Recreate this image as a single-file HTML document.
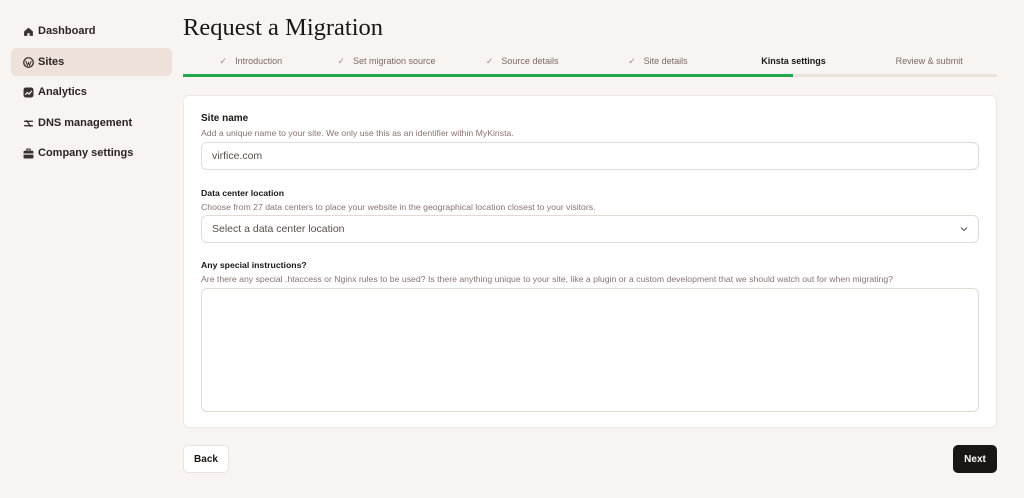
<!DOCTYPE html>
<html><head><style>
*{box-sizing:border-box;margin:0;padding:0}
body{width:1024px;height:498px;background:#f8f4f1;font-family:"Liberation Sans",sans-serif;position:relative;overflow:hidden;color:#1a1615}
.nav{position:absolute;left:11px;width:161px;height:28px;display:flex;align-items:center;padding-left:12px;font-size:11px;color:#2a2422;font-weight:600}
.nav svg{width:11px;height:11px;margin-right:4px}
.act{background:#ede1d9;border-radius:5px}
h1{position:absolute;left:183px;top:14px;font-family:"Liberation Serif",serif;font-weight:400;font-size:24.5px;color:#1a1615}
.steps{position:absolute;left:183px;top:56px;width:814px;display:flex;font-size:9px;color:#7a6a66}
.steps div{flex:1;text-align:center}
.steps span{color:#9a8f8b;margin-right:8px}
.bar{position:absolute;left:183px;top:74px;width:814px;height:3px;background:#ece3de}
.bar i{display:block;width:610px;height:3px;background:#1fa74a}
.card{position:absolute;left:183px;top:95px;width:814px;height:333px;background:#fff;border-radius:6px;border:1px solid #efe8e4}
.lbl{position:absolute;left:17px;font-size:10px;font-weight:600;color:#1a1615}
.hint{position:absolute;left:17px;font-size:8.7px;color:#8a7370}
.inp{position:absolute;left:17px;width:778px;border:1px solid #e3dad6;border-radius:6px;font-size:10.5px;color:#5a4e4b;padding-left:10px;display:flex;align-items:center}
.btn{position:absolute;top:445px;height:28px;border-radius:5px;font-size:10px;font-weight:600;display:flex;align-items:center;justify-content:center}
</style></head><body>
<div class="nav" style="top:17px"><svg viewBox="0 0 10 10"><path d="M1 5L5 1.5 9 5V9H6V6.5H4V9H1Z" fill="#3a3230"/></svg>Dashboard</div>
<div class="nav act" style="top:48px"><svg viewBox="0 0 10 10"><circle cx="5" cy="5" r="4.3" fill="none" stroke="#3a3230" stroke-width="1.2"/><path d="M2.5 3.5L4 7.5 5 5 6 7.5 7.5 3.5" fill="none" stroke="#3a3230" stroke-width=".9"/></svg>Sites</div>
<div class="nav" style="top:78px"><svg viewBox="0 0 10 10"><rect x=".5" y=".5" width="9" height="9" rx="2" fill="#3a3230"/><path d="M2 7L4 5 5.5 6.5 8 3.5" stroke="#fff" fill="none"/></svg>Analytics</div>
<div class="nav" style="top:109px"><svg viewBox="0 0 10 10"><path d="M1 3H9M1 7H9M3 2L7 8" stroke="#3a3230" stroke-width="1.2"/></svg>DNS management</div>
<div class="nav" style="top:139px"><svg viewBox="0 0 10 10"><rect x=".5" y="2.5" width="9" height="7" rx="1" fill="#3a3230"/><rect x="3.5" y="1" width="3" height="2" fill="none" stroke="#3a3230"/><path d="M.5 5.5H9.5" stroke="#fff"/></svg>Company settings</div>
<h1>Request a Migration</h1>
<div class="steps"><div><span>✓</span>Introduction</div><div><span>✓</span>Set migration source</div><div><span>✓</span>Source details</div><div><span>✓</span>Site details</div><div style="color:#1a1615;font-weight:600">Kinsta settings</div><div>Review &amp; submit</div></div>
<div class="bar"><i></i></div>
<div class="card">
<div class="lbl" style="top:17px">Site name</div>
<div class="hint" style="top:32px">Add a unique name to your site. We only use this as an identifier within MyKinsta.</div>
<div class="inp" style="top:46px;height:28px">virfice.com</div>
<div class="lbl" style="top:92px;font-size:8.7px">Data center location</div>
<div class="hint" style="top:106px">Choose from 27 data centers to place your website in the geographical location closest to your visitors.</div>
<div class="inp" style="top:119px;height:28px">Select a data center location<svg style="position:absolute;right:10px" width="8" height="6" viewBox="0 0 8 6"><path d="M1 1.5L4 4.5 7 1.5" stroke="#5a4e4b" fill="none"/></svg></div>
<div class="lbl" style="top:164px;font-size:8.7px">Any special instructions?</div>
<div class="hint" style="top:178px">Are there any special .htaccess or Nginx rules to be used? Is there anything unique to your site, like a plugin or a custom development that we should watch out for when migrating?</div>
<div class="inp" style="top:192px;height:124px"></div>
</div>
<div class="btn" style="left:183px;width:46px;background:#fff;border:1px solid #ebe3df;color:#1a1615">Back</div>
<div class="btn" style="left:953px;width:44px;background:#1a1615;color:#fff">Next</div>
</body></html>
